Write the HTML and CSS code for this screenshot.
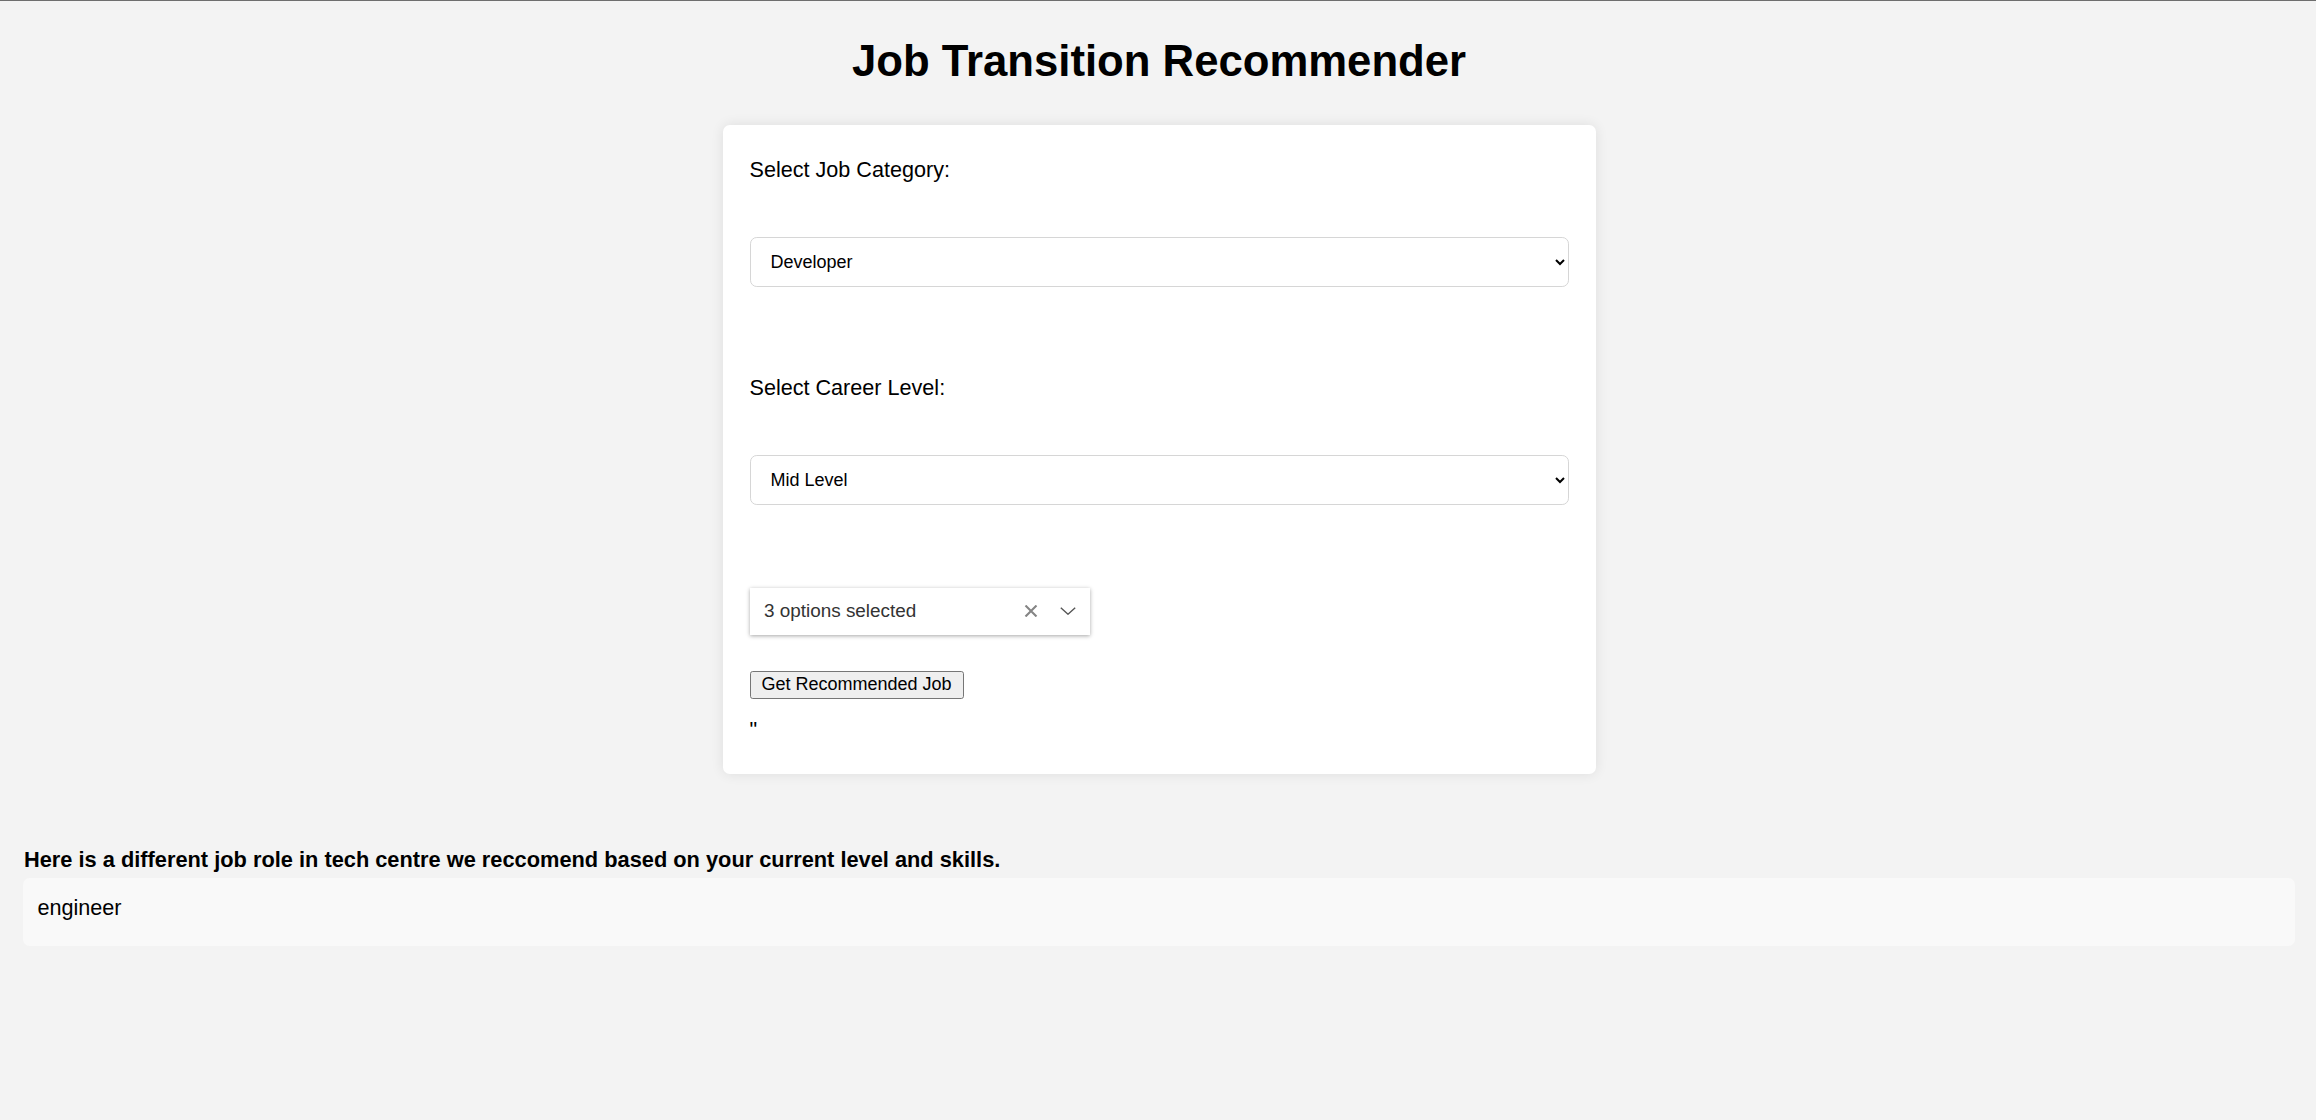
FILE: index.html
```html
<!DOCTYPE html>
<html lang="en">
<head>
<meta charset="utf-8">
<title>Job Transition Recommender</title>
<link rel="stylesheet" href="styles.css">
</head>
<body>
<h1 class="title">Job Transition Recommender</h1>
<div class="card">
  <label class="field-label" for="cat">Select Job Category:</label>
  <select id="cat" class="field-select first-select">
    <option>Developer</option>
  </select>
  <label class="field-label second-label" for="lvl">Select Career Level:</label>
  <select id="lvl" class="field-select">
    <option>Mid Level</option>
  </select>
  <div class="multi">
    <span class="multi-text">3 options selected</span>
    <span class="multi-icons">
      <svg class="icon-x" width="14" height="12" viewBox="0 0 14 12"><path d="M1.5 0.5 L12.5 11.5 M12.5 0.5 L1.5 11.5" stroke="#858585" stroke-width="2.1" fill="none"/></svg>
      <svg class="icon-chev" width="16" height="8" viewBox="0 0 16 8"><path d="M0.8 0.8 L8 7.2 L15.2 0.8" stroke="#555" stroke-width="1.4" fill="none"/></svg>
    </span>
  </div>
  <button class="go-btn" type="button">Get Recommended Job</button>
  <div class="quote">"</div>
</div>
<div class="result-title">Here is a different job role in tech centre we reccomend based on your current level and skills.</div>
<div class="result-box">engineer</div>
</body>
</html>
```

FILE: styles.css
```css
html {
  background: #f3f3f3;
}
body {
  margin: 0;
  padding: 21.6px 21px 21.6px 23px;
  border-top: 1px solid #6e6e6e;
  background: #f3f3f3;
  font-family: "Liberation Sans", Arial, sans-serif;
  font-size: 21.6px;
  color: #000;
}
.title {
  text-align: center;
  font-size: 43.7px;
  font-weight: bold;
  line-height: normal;
  margin: 13px 0 39.4px;
}
.card {
  width: 819px;
  margin: 0 auto;
  padding: 32px 27px 31px;
  background: #fff;
  border-radius: 6.75px;
  box-shadow: 0 0 13px rgba(0, 0, 0, 0.09);
  display: flex;
  flex-direction: column;
  align-items: flex-start;
}
.field-label {
  display: block;
  font-size: 21.6px;
  line-height: normal;
  color: #000;
}
.second-label {
  margin-top: 88px;
}
.field-select {
  width: 100%;
  height: 50px;
  box-sizing: border-box;
  margin-top: 54px;
  padding: 0 13px 0 16px;
  font-family: "Liberation Sans", Arial, sans-serif;
  font-size: 18px;
  color: #000;
  background: #fff;
  border: 1px solid #d6d6d6;
  border-radius: 6.75px;
}
.multi {
  margin-top: 83px;
  width: 340px;
  height: 47px;
  box-sizing: border-box;
  padding: 0 14px 0 14.5px;
  background: #fff;
  box-shadow: 0 1px 4px rgba(0, 0, 0, 0.35);
  display: flex;
  align-items: center;
  justify-content: space-between;
}
.multi-text {
  font-size: 18.9px;
  color: #333;
}
.multi-icons {
  display: flex;
  align-items: center;
  gap: 22px;
}
.icon-x, .icon-chev {
  display: block;
}
.go-btn {
  margin-top: 36px;
  height: 28px;
  padding: 0 11px;
  font-family: "Liberation Sans", Arial, sans-serif;
  font-size: 18px;
  color: #000;
  background: #efefef;
  border: 1px solid #767676;
  border-radius: 2.7px;
}
.quote {
  margin-top: 18px;
  font-size: 21.6px;
  line-height: normal;
}
.result-title {
  margin-top: 73px;
  font-weight: bold;
  font-size: 21.8px;
  line-height: normal;
  padding-left: 1px;
}
.result-box {
  margin-top: 4.6px;
  padding: 17px 13.5px 25px 14.5px;
  background: #f9f9f9;
  border-radius: 6.75px;
  font-size: 21.6px;
  line-height: normal;
}
```
